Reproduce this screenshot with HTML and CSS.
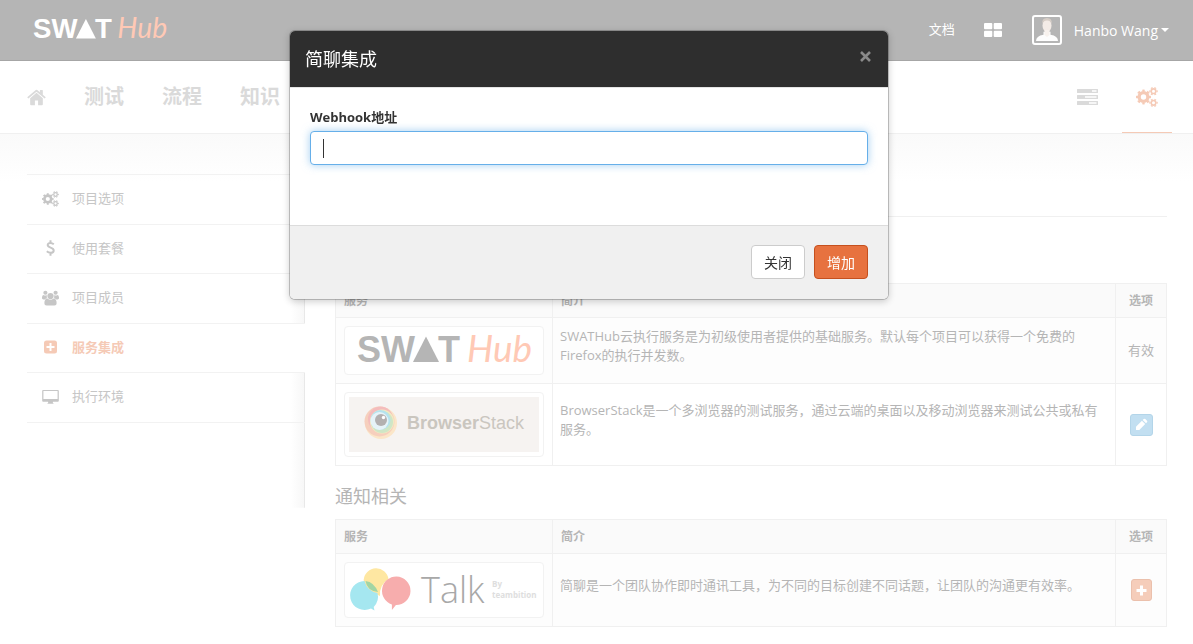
FILE: index.html
```html
<!DOCTYPE html>
<html lang="zh-CN">
<head>
<meta charset="utf-8">
<meta name="viewport" content="width=device-width, initial-scale=1">
<title>SWATHub</title>
<link rel="stylesheet" href="styles.css">
</head>
<body>
<svg class="sprite" aria-hidden="true">
  <symbol id="cogs" viewBox="0 0 22 20">
    <g fill="none" stroke="currentColor">
      <circle cx="7.5" cy="10" r="4.400" stroke-width="3.400"/>
      <circle cx="7.5" cy="10" r="6.4" stroke-width="2.2" pathLength="16" stroke-dasharray="1 1" stroke-dashoffset="0.5"/>
      <circle cx="17.5" cy="4.2" r="2.3" stroke-width="1.6"/>
      <circle cx="17.5" cy="4.2" r="3.6" stroke-width="1.3" pathLength="12" stroke-dasharray="1 1" stroke-dashoffset="0.5"/>
      <circle cx="17.5" cy="15.8" r="2.3" stroke-width="1.6"/>
      <circle cx="17.5" cy="15.8" r="3.6" stroke-width="1.3" pathLength="12" stroke-dasharray="1 1" stroke-dashoffset="0.5"/>
    </g>
  </symbol>
  <symbol id="home" viewBox="0 0 18 16">
    <path fill="currentColor" d="M9 3.6 15 8.6V14.5a.8.8 0 0 1-.8.8H10.500V10.800H7.500V15.300H3.800a.8.8 0 0 1-.8-.8V8.600Z"/>
    <path fill="currentColor" d="M8.300.9a1.100 1.100 0 0 1 1.400 0L12.200 3V1.300q0-.4.4-.4h2q.4 0 .4.4v4.100l2.500 2.100q.4.3.1.6l-.6.700q-.3.3-.6 0L9 2.600 1.600 8.800q-.3.3-.6 0L.4 8.100q-.3-.3.1-.6Z"/>
  </symbol>
  <symbol id="users" viewBox="0 0 18 16">
    <g fill="currentColor">
      <circle cx="3.600" cy="2.400" r="2.200"/><circle cx="14.400" cy="2.400" r="2.200"/>
      <path d="M0 7.500Q0 4.700 1.600 4.700q2 1.200 4 0Q4.500 6.500 5.300 8.300 3.500 8.500 3 9.500H1.500Q0 9.500 0 8.300ZM18 7.500Q18 4.700 16.400 4.700q-2 1.200-4 0 1.100 1.800.3 3.600 1.800.2 2.300 1.200h1.500q1.500 0 1.500-1.200Z"/>
      <circle cx="9" cy="6" r="3.300"/>
      <path d="M2.500 13.500q0-5 3.300-5 3.200 2.600 6.400 0 3.300 0 3.300 5 0 2.400-2.300 2.400H4.800q-2.300 0-2.300-2.400Z"/>
    </g>
  </symbol>
  <symbol id="dollar" viewBox="0 0 10 16">
    <path fill="none" stroke="currentColor" stroke-width="2" d="M8.300 4.300C7.200 3.400 6.200 3 5 3 3.300 3 2.200 3.800 2.200 5.100 2.200 8.100 8.200 7.100 8.200 10.400c0 1.500-1.300 2.400-3.200 2.400-1.400 0-2.600-.5-3.700-1.500M5 .2V3M5 12.800v2.900"/>
  </symbol>
  <symbol id="plus-square" viewBox="0 0 14 14">
    <path fill="currentColor" fill-rule="evenodd" d="M3 .5h8A2.500 2.500 0 0 1 13.500 3v8a2.500 2.500 0 0 1-2.500 2.500H3A2.500 2.500 0 0 1 .5 11V3A2.500 2.500 0 0 1 3 .5ZM6 3v3H3v2h3v3h2V8h3V6H8V3Z"/>
  </symbol>
  <symbol id="desktop" viewBox="0 0 18 16">
    <path fill="currentColor" fill-rule="evenodd" d="M1.200.5h15.600q1 0 1 1v10.500q0 1-1 1H11.500v1.200q.8.3.8 1H5.700q0-.7.8-1V13H1.200q-1 0-1-1V1.500q0-1 1-1ZM1.500 1.700v8.300h15V1.700Z"/>
  </symbol>
  <symbol id="tasks" viewBox="0 0 21 16">
    <path fill="currentColor" fill-rule="evenodd" d="M.5 0h20q.5 0 .5.500v3q0 .5-.5.500H.5Q0 4 0 3.500v-3Q0 0 .5 0ZM15 1.200v1.600h4.500V1.200ZM.5 6h20q.5 0 .5.500v3q0 .5-.5.500H.5Q0 10 0 9.500v-3Q0 6 .5 6ZM8 7.200v1.600h11.500V7.200ZM.5 12h20q.5 0 .5.500v3q0 .5-.5.500H.5Q0 16 0 15.500v-3Q0 12 .5 12ZM12 13.200v1.600h7.500v-1.600Z"/>
  </symbol>
</svg>

<header class="topbar">
  <a class="brand" href="#" aria-label="SWATHub">
    <svg class="brand-logo" viewBox="0 0 180 36">
      <text class="logo-swat" x="0" y="29" font-size="36">SW</text>
      <path class="logo-mark" d="M69 3.500 82 29H56Z"/>
      <text class="logo-swat" x="81" y="29" font-size="36">T</text>
      <text class="logo-hub" x="110" y="29" font-size="37">Hub</text>
    </svg>
  </a>
  <nav class="topmenu" aria-label="用户">
    <a href="#">文档</a>
    <a class="grid-link" href="#" aria-label="应用">
      <svg width="18" height="14" viewBox="0 0 18 14" fill="currentColor"><rect width="8.300" height="6.300" rx="1"/><rect x="9.700" width="8.300" height="6.300" rx="1"/><rect y="7.700" width="8.300" height="6.300" rx="1"/><rect x="9.700" y="7.700" width="8.300" height="6.300" rx="1"/></svg>
    </a>
    <a class="user" href="#">
      <svg class="avatar" viewBox="0 0 26 26" aria-hidden="true"><path fill="#fdfdfd" d="M2 24q0-5 7.500-6.200v-3h7v3q7.500 1.200 7.500 6.200Z"/><ellipse cx="13" cy="8.500" rx="4.500" ry="6.500" fill="#f3ebe6"/><path fill="#f8f2ee" d="M10.500 13h5v5L13 20l-2.500-2Z"/><path fill="#d6cdc6" d="M8.300 7Q7.500 1 13 1T17.700 7Q17 3.500 13 3.500T8.300 7Z"/></svg>
      <span class="user-name">Hanbo Wang</span><span class="caret"></span>
    </a>
  </nav>
</header>

<nav class="mainnav" aria-label="主导航">
  <a class="home" href="#" aria-label="首页"><svg width="19" height="17"><use href="#home"/></svg></a>
  <a href="#">测试</a>
  <a href="#">流程</a>
  <a href="#">知识</a>
  <span class="spacer"></span>
  <a class="tool" href="#" aria-label="任务"><svg width="21" height="16"><use href="#tasks"/></svg></a>
  <a class="tool tool-active" href="#" aria-label="设置"><svg width="22" height="20"><use href="#cogs"/></svg></a>
</nav>

<div class="page">
  <aside class="sidebar">
    <ul class="menu">
      <li><a href="#"><svg class="icon"><use href="#cogs"/></svg>项目选项</a></li>
      <li><a href="#"><svg class="icon"><use href="#dollar"/></svg>使用套餐</a></li>
      <li><a href="#"><svg class="icon"><use href="#users"/></svg>项目成员</a></li>
      <li class="active"><a href="#"><svg class="icon icon-small"><use href="#plus-square"/></svg>服务集成</a></li>
      <li><a href="#"><svg class="icon"><use href="#desktop"/></svg>执行环境</a></li>
    </ul>
  </aside>

  <main class="content">
    <hr class="rule">
    <table class="services">
      <thead><tr><th class="col-service">服务</th><th>简介</th><th class="col-option">选项</th></tr></thead>
      <tbody>
        <tr class="odd">
          <td><div class="thumb thumb-swat">
            <svg width="180" height="36" viewBox="0 0 180 36" role="img" aria-label="SWATHub">
              <text class="logo-swat" x="0" y="30" font-size="36">SW</text>
              <path class="logo-mark" d="M69 4.500 82 30H56Z"/>
              <text class="logo-swat" x="81" y="30" font-size="36">T</text>
              <text class="logo-hub" x="110" y="30" font-size="37">Hub</text>
            </svg></div></td>
          <td class="intro">SWATHub云执行服务是为初级使用者提供的基础服务。默认每个项目可以获得一个免费的Firefox的执行并发数。</td>
          <td class="option">有效</td>
        </tr>
        <tr>
          <td><div class="thumb">
            <div class="browserstack">
              <svg width="34" height="34" viewBox="0 0 34 34" aria-hidden="true">
                <circle cx="17" cy="17" r="16" fill="#fbe6c8"/><circle cx="15.500" cy="15.500" r="15" fill="#f6cfbd"/><circle cx="16.500" cy="13" r="12.500" fill="#f4bcbc"/><circle cx="18" cy="15.500" r="12" fill="#f2ebc2"/><circle cx="18" cy="16" r="11" fill="#cfe6c6"/><circle cx="16.500" cy="14" r="10" fill="#b5e3ee"/><circle cx="15.500" cy="15" r="9" fill="#e6f3f8"/><circle cx="17" cy="14" r="6" fill="#b3b0b0"/><circle cx="19.500" cy="11.500" r="1.700" fill="#fff"/>
              </svg>
              <span class="bs-name"><b>Browser</b>Stack</span>
            </div></div></td>
          <td class="intro">BrowserStack是一个多浏览器的测试服务，通过云端的桌面以及移动浏览器来测试公共或私有服务。</td>
          <td class="option"><button class="mini mini-edit" type="button" aria-label="编辑"><svg width="13" height="13" viewBox="0 0 13 13"><path fill="#fff" d="M1 12V8.700L6.900 2.800l3.300 3.300L4.300 12ZM7.700 2l1-1q.8-.7 1.600 0l1.700 1.700q.7.8 0 1.600l-1 1Z"/></svg></button></td>
        </tr>
      </tbody>
    </table>

    <h2 class="heading">通知相关</h2>
    <table class="services">
      <thead><tr><th class="col-service">服务</th><th>简介</th><th class="col-option">选项</th></tr></thead>
      <tbody>
        <tr class="odd">
          <td><div class="thumb thumb-talk">
            <svg width="190" height="46" viewBox="0 0 190 46" role="img" aria-label="Talk By teambition">
              <path fill="#fee7a2" d="M39.500 12A12.500 12.500 0 1 0 24.500 26L31 29Q30 18 39.500 12Z"/>
              <path fill="#a5e7f0" d="M15.500 14a14.500 14.500 0 1 0 6.500 27.500l3.500 2-.8-3.600A14.500 14.500 0 0 0 28.500 26Q18 24 15.500 14Z"/>
              <path fill="#a2d5a4" d="M16.500 14Q25 15 29 25 18 24 16.500 14Z"/>
              <path fill="#f7adad" d="M47.500 9.500a14.300 14.300 0 0 0-4.600 27.900V43l4-4.900A14.300 14.300 0 1 0 47.500 9.500Z"/>
              <text class="talk-name" x="72" y="36" font-size="36">Talk</text>
              <text class="talk-by" x="143" y="20" font-size="8">By</text>
              <text class="talk-by" x="143" y="31" font-size="8">teambition</text>
            </svg></div></td>
          <td class="intro">简聊是一个团队协作即时通讯工具，为不同的目标创建不同话题，让团队的沟通更有效率。</td>
          <td class="option"><button class="mini mini-add" type="button" aria-label="增加服务"><svg width="11" height="11" viewBox="0 0 11 11"><path fill="#fff" d="M4 .5h3V4h3.500v3H7v3.500H4V7H.5V4H4Z"/></svg></button></td>
        </tr>
      </tbody>
    </table>
  </main>
</div>

<div class="overlay">
  <form class="modal" role="dialog" aria-labelledby="dialog-title">
    <div class="modal-head">
      <h1 class="modal-title" id="dialog-title">简聊集成</h1>
      <button class="close" type="button" aria-label="关闭窗口"><svg width="11" height="11" viewBox="0 0 11 11"><path d="M1 1l9 9M10 1l-9 9" stroke="currentColor" stroke-width="2.600"/></svg></button>
    </div>
    <div class="modal-body">
      <label for="webhook">Webhook地址</label>
      <input id="webhook" type="text">
    </div>
    <div class="modal-foot">
      <button class="btn" type="button">关闭</button>
      <button class="btn btn-primary" type="submit">增加</button>
    </div>
  </form>
</div>
</body>
</html>
```
FILE: styles.css
```css
* { box-sizing: border-box; }

body {
  margin: 0;
  background: #fff;
  color: #b5b5b5;
  font-family: "Open Sans", "Noto Sans CJK SC", sans-serif;
  font-size: 13px;
  line-height: 1.5;
}

a { color: inherit; text-decoration: none; }
svg { display: block; overflow: visible; }
.sprite { position: absolute; width: 0; height: 0; }

/* Top bar */
.topbar {
  display: flex;
  align-items: center;
  justify-content: space-between;
  height: 61px;
  padding: 0 24px 0 33px;
  background: #b5b5b5;
  border-bottom: 1px solid #a6a6a6;
  color: #fff;
}
.brand-logo { width: 138px; height: 28px; }
.logo-swat { font-family: "Liberation Sans", Arial, sans-serif; font-weight: 700; fill: #b5b5b5; }
.logo-mark { fill: #b5b5b5; }
.logo-hub { font-family: Lato, sans-serif; font-style: italic; fill: #ffc9b5; }
.brand .logo-swat, .brand .logo-mark { fill: #fff; }
.topmenu { display: flex; align-items: center; }
.grid-link { margin: 0 30px 0 29px; }
.user { display: flex; align-items: center; }
.avatar { width: 30px; height: 30px; border: 2px solid #fff; border-radius: 3px; }
.user-name { margin-left: 12px; font-size: 14px; }
.caret { margin-left: 3px; border: 4px solid transparent; border-top-color: #fff; border-bottom: 0; }

/* Main navigation */
.mainnav {
  display: flex;
  align-items: center;
  gap: 38px;
  height: 73px;
  padding: 0 21px 0 27px;
  border-bottom: 1px solid #f0f0f0;
  color: #dadada;
  font-size: 20px;
  font-weight: 700;
}
.spacer { flex: 1; }
.tool { display: flex; align-items: center; justify-content: center; align-self: stretch; width: 50px; border-bottom: 1px solid transparent; }
.mainnav .tool + .tool { margin-left: -28px; }
.tool-active { color: #f5cab6; border-color: #f5cab6; }

/* Page */
.page {
  display: flex;
  align-items: flex-start;
  gap: 30px;
  padding: 40px 26px 16px 27px;
  background: linear-gradient(#fafafa, #fdfdfd 30px, #fff 48px) no-repeat;
}
.sidebar {
  flex: 0 0 278px;
  padding-bottom: 85px;
  background: linear-gradient(to right, transparent, #f7f7f7 13px, #e8e8e8 13px) right / 14px 100% no-repeat;
}
.menu { margin: 0; padding: 0; list-style: none; border-top: 1px solid #f2f2f2; }
.menu li { border-bottom: 1px solid #f2f2f2; }
.menu a { display: flex; align-items: center; gap: 13px; padding: 14px 15px 15px; color: #c6c6c6; }
.menu .active { background: #fff; }
.menu .active a { color: #f5cab6; font-weight: 700; }
.icon { width: 17px; height: 16px; }
.icon-small { height: 14px; }

.content { flex: 1; min-width: 0; }
.rule { margin: 42px 0 66px; border: 0; border-top: 1px solid #f0f0f0; }
.heading { margin: 16px 0 8px; font-size: 18px; font-weight: 400; line-height: 29px; }

.services { width: 100%; border-collapse: collapse; table-layout: fixed; }
.services th, .services td { border: 1px solid #f0f0f0; padding: 8px; text-align: left; }
.services th { background: #fafafa; font-size: 12px; line-height: 17px; }
.services .odd { background: #fdfdfd; }
.services .col-service { width: 217px; }
.services .col-option { width: 51px; text-align: center; }
.services .intro { padding-left: 7px; padding-bottom: 18px; line-height: 19px; }
.services .option { padding: 8px 0; text-align: center; }
.thumb { padding: 4px; background: #fff; border: 1px solid #f2f2f2; border-radius: 4px; }
.thumb-swat { padding: 5px 0 6px 12px; }
.browserstack { display: flex; align-items: center; gap: 9px; height: 55px; padding: 0 0 3px 15px; background: #f6f3f1; }
.bs-name { font-family: "Liberation Sans", Arial, sans-serif; font-size: 18px; color: #cac6bf; }
.talk-name { font-family: "Open Sans", sans-serif; font-weight: 300; fill: #a8a8a8; }
.talk-by { font-family: "Open Sans", sans-serif; font-weight: 700; fill: #dedede; }
.mini { display: inline-flex; align-items: center; justify-content: center; height: 22px; padding: 0 4px; border: 1px solid; border-radius: 3px; vertical-align: middle; }
.mini-edit { background: #c2dff1; border-color: #b3d5e9; }
.mini-add { background: #f5cdba; border-color: #ebc0ac; }

/* Dialog */
.overlay { position: fixed; inset: 0; display: flex; align-items: flex-start; justify-content: center; padding: 30px 15px 0 0; }
.modal {
  width: 600px;
  max-width: 100%;
  background: #fff;
  background-clip: padding-box;
  border: 1px solid rgba(0, 0, 0, .2);
  border-radius: 6px;
  box-shadow: 0 2px 7px rgba(0, 0, 0, .18);
  overflow: hidden;
  color: #333;
}
.modal-head { display: flex; align-items: flex-start; justify-content: space-between; padding: 15px; background: #2e2e2e; border-bottom: 1px solid #e5e5e5; color: #fff; }
.modal-title { margin: 0; font-size: 18px; font-weight: 400; line-height: 26px; }
.close { margin: 5px 2px 0 0; padding: 0; border: 0; background: none; color: #8a8a8a; }
.modal-body { padding: 20px 20px 60px; }
.modal-body label { display: block; margin-bottom: 4px; font-weight: 700; line-height: 19px; }
.modal-body input {
  display: block;
  width: 100%;
  height: 34px;
  padding: 6px 12px;
  border: 1px solid #66afe9;
  border-radius: 4px;
  outline: 0;
  background: linear-gradient(#333, #333) 12px center / 1px 19px no-repeat #fff;
  box-shadow: 0 0 8px rgba(102, 175, 233, .6);
  font: inherit;
}
.modal-foot { display: flex; justify-content: flex-end; gap: 9px; padding: 19px 20px 20px; border-top: 1px solid #dcdcdc; background: #f0f0f0; }
.btn { height: 34px; padding: 0 12px; border: 1px solid #ccc; border-radius: 4px; background: #fff; color: #333; font: inherit; font-size: 14px; }
.btn-primary { border-color: #c5501e; background: #e7723f; color: #fff; }
```
